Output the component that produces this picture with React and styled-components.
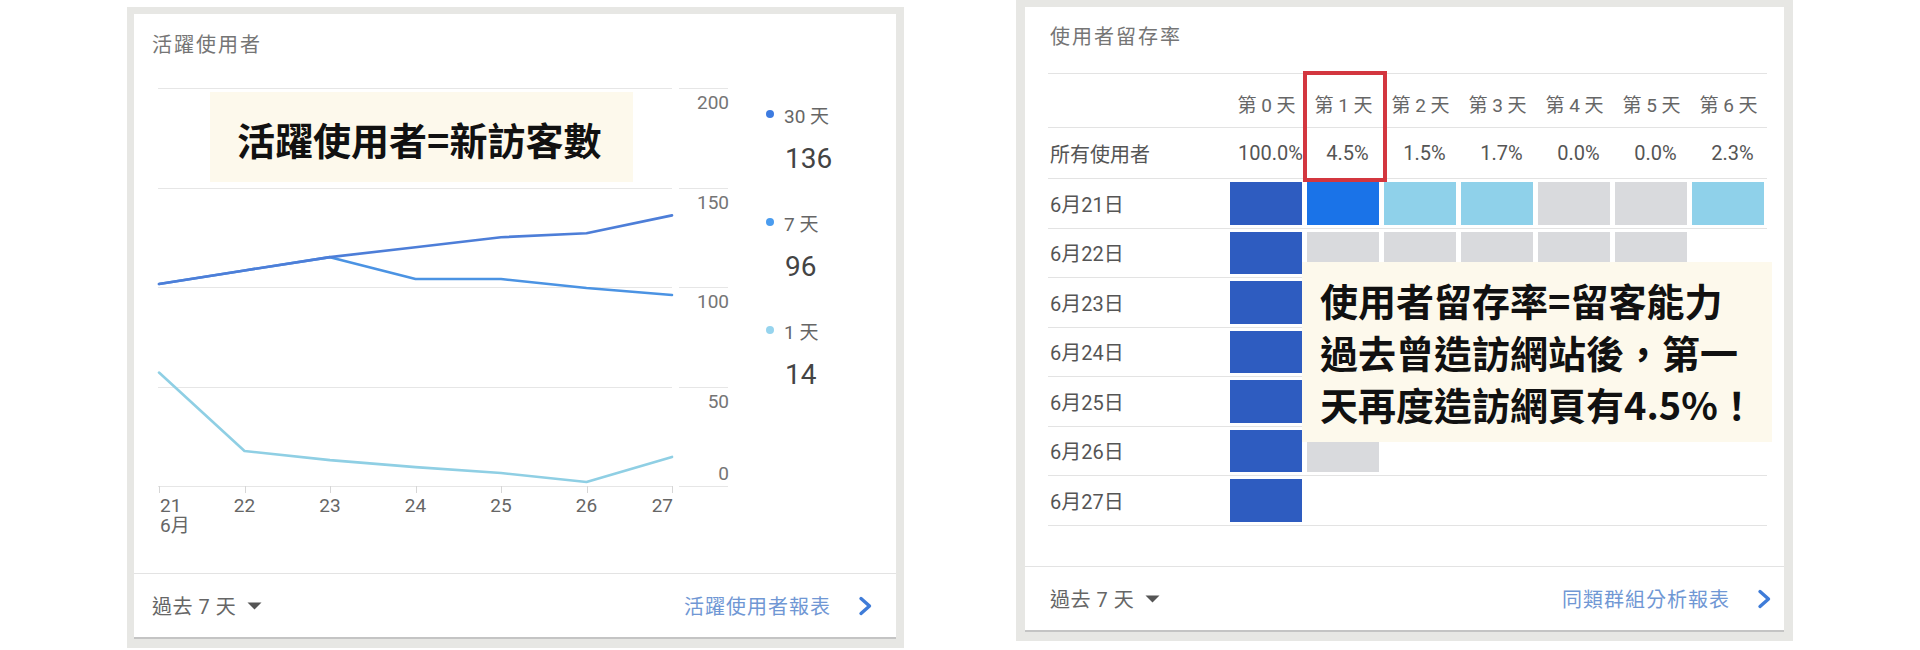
import React from 'react';
import styled, { createGlobalStyle } from 'styled-components';

const GlobalStyle = createGlobalStyle`
  html, body { margin: 0; padding: 0; background: #ffffff; }
  body { font-family: Roboto, "Noto Sans CJK TC", sans-serif; }
  * { box-sizing: border-box; }
`;

const Page = styled.div`
  width: 1920px;
  height: 650px;
  overflow: hidden;
  display: flex;
  align-items: flex-start;
  gap: 112px;
  padding-left: 127px;
`;

const Frame = styled.div`
  background: #e7e7e4;
  padding: ${(p) => p.$pad};
  margin-top: ${(p) => p.$top}px;
`;

const Card = styled.div`
  position: relative;
  width: ${(p) => p.$w}px;
  height: 623px;
  background: #ffffff;
  box-shadow: 0 2px 0 #c4c4c4;
  display: flex;
  flex-direction: column;
`;

const CardTitle = styled.div`
  height: ${(p) => p.$pt + 26}px;
  padding: ${(p) => p.$pt}px 0 0 ${(p) => p.$pl}px;
  font-size: 20px;
  letter-spacing: 2px;
  line-height: 26px;
  color: #757575;
  white-space: nowrap;
`;

/* ---------- left card: chart ---------- */

const ChartRow = styled.div`
  position: relative;
  display: flex;
  height: 515px;
  padding-left: 18px;
`;

const ChartSvg = styled.svg`
  display: block;
  flex: none;
  font-family: Roboto, "Noto Sans CJK TC", sans-serif;
`;

const Legend = styled.div`
  display: flex;
  flex-direction: column;
  margin-left: 32px;
  padding-top: 44px;
`;

const LegendItem = styled.div`
  height: 108px;
`;

const LegendLabel = styled.div`
  display: flex;
  align-items: center;
  height: 24px;
  font-size: 19px;
  color: #666666;
  white-space: nowrap;
`;

const Dot = styled.span`
  width: 8px;
  height: 8px;
  border-radius: 50%;
  background: ${(p) => p.$c};
  margin-right: 10px;
`;

const LegendValue = styled.div`
  margin-top: 15px;
  margin-left: 19px;
  font-size: 28px;
  line-height: 36px;
  color: #444444;
`;

const Note = styled.div`
  position: absolute;
  left: ${(p) => p.$left}px;
  top: ${(p) => p.$top}px;
  width: ${(p) => p.$w}px;
  height: ${(p) => p.$h}px;
  padding: ${(p) => p.$pad};
  background: #fdf9ec;
  font-family: "Noto Sans CJK TC", sans-serif;
  font-weight: 700;
  font-size: 38px;
  line-height: ${(p) => p.$lh}px;
  color: #111111;
  z-index: 2;
`;

const NoteLine = styled.div`
  white-space: nowrap;
`;

/* ---------- right card: table ---------- */

const Table = styled.div`
  position: relative;
  margin: 23px 17px 0 23px;
  border-top: 1px solid #e3e3e3;
`;

const Row = styled.div`
  display: grid;
  grid-template-columns: 180px repeat(7, 77px);
  align-items: center;
  height: ${(p) => p.$h}px;
  border-bottom: 1px solid #e3e3e3;
`;

const RowLabel = styled.div`
  padding-left: 2px;
  font-size: 20px;
  color: #555555;
  white-space: nowrap;
`;

const HeadCell = styled.div`
  text-align: center;
  padding-top: 5px;
  font-size: 19px;
  color: #666666;
  white-space: nowrap;
`;

const PctCell = styled.div`
  text-align: center;
  padding-left: 8px;
  font-size: 20px;
  color: #555555;
  white-space: nowrap;
`;

const Cell = styled.div`
  align-self: stretch;
  margin: 3px 3px 3px 2px;
  background: ${(p) => p.$c};
`;

const Highlight = styled.div`
  position: absolute;
  left: 255px;
  top: -3px;
  width: 84px;
  height: 111px;
  border: 4px solid #d3363f;
  z-index: 3;
`;

/* ---------- footer ---------- */

const Footer = styled.div`
  margin-top: auto;
  height: 64px;
  border-top: 1px solid #e3e3e3;
  display: flex;
  align-items: center;
  justify-content: space-between;
  padding: 0 ${(p) => p.$pr}px 0 ${(p) => p.$pl}px;
`;

const Range = styled.div`
  display: flex;
  align-items: center;
  font-size: 20px;
  letter-spacing: 0.5px;
  color: #666666;
  white-space: nowrap;
`;

const Caret = styled.svg`
  margin-left: 11px;
  display: block;
`;

const ReportLink = styled.div`
  display: flex;
  align-items: center;
  font-size: 20px;
  letter-spacing: 1px;
  color: #7097d4;
  white-space: nowrap;
`;

const Chevron = styled.svg`
  margin-left: 27px;
  display: block;
`;

/* ---------- data ---------- */

const X = (i) => 7 + i * 85.5;
const Y = (v) => 428 - v * 1.99;

const series = [
  { color: '#4d7ed8', data: [101.5, 108.3, 115, 120, 125, 127, 136] },
  { color: '#4b93e3', data: [101.5, 108.3, 115, 104, 104, 99.5, 96] },
  { color: '#8fcfe4', data: [57, 17.6, 13, 9.5, 6.5, 2, 14.6] },
];

const legend = [
  { label: '30 天', value: '136', color: '#3d7be0' },
  { label: '7 天', value: '96', color: '#4a9cef' },
  { label: '1 天', value: '14', color: '#96d4ee' },
];

const COL = {
  d: '#2e5cc0',
  b: '#1a73e8',
  l: '#8fd1ea',
  g: '#d9dadd',
};

const retentionRows = [
  { label: '6月21日', cells: 'dbllggl' },
  { label: '6月22日', cells: 'dggggg' },
  { label: '6月23日', cells: 'dgggg' },
  { label: '6月24日', cells: 'dggg' },
  { label: '6月25日', cells: 'dgg' },
  { label: '6月26日', cells: 'dg' },
  { label: '6月27日', cells: 'd' },
];

const pcts = ['100.0%', '4.5%', '1.5%', '1.7%', '0.0%', '0.0%', '2.3%'];

function CaretIcon() {
  return (
    <Caret width="15" height="8" viewBox="0 0 15 8">
      <path d="M0.5 0.5 L14.5 0.5 L7.5 7.5 Z" fill="#555555" />
    </Caret>
  );
}

function ChevronIcon() {
  return (
    <Chevron width="15" height="20" viewBox="0 0 15 20">
      <polyline
        points="3,2.5 11.5,10 3,17.5"
        fill="none"
        stroke="#3f7cd8"
        strokeWidth="3.4"
        strokeLinecap="round"
        strokeLinejoin="round"
      />
    </Chevron>
  );
}

function LineChart() {
  const ticks = [200, 150, 100, 50, 0];
  const days = [21, 22, 23, 24, 25, 26, 27];
  return (
    <ChartSvg width="582" height="515" viewBox="0 0 582 515">
      {ticks.map((v) => {
        const y = Math.round(Y(v)) + 0.5;
        return (
          <g key={v}>
            <line x1="6" x2="520" y1={y} y2={y} stroke="#e6e6e6" strokeWidth="1" />
            <line x1="527" x2="576" y1={y} y2={y} stroke="#e6e6e6" strokeWidth="1" />
            <text
              x="577"
              y={v === 0 ? y - 7 : y + 20}
              textAnchor="end"
              fontSize="19"
              fill="#757575"
            >
              {v}
            </text>
          </g>
        );
      })}
      {days.map((d, i) => {
        const x = Math.round(X(i)) + 0.5;
        const anchor = i === 0 ? 'start' : i === 6 ? 'end' : 'middle';
        const tx = i === 0 ? X(i) + 1 : i === 6 ? X(i) + 1 : X(i);
        return (
          <g key={d}>
            <line x1={x} x2={x} y1="428" y2="435" stroke="#d6d6d6" strokeWidth="1" />
            <text x={tx} y="454" textAnchor={anchor} fontSize="19" fill="#666666">
              {d}
            </text>
          </g>
        );
      })}
      <text x="8" y="474" fontSize="19" fill="#666666">
        6月
      </text>
      {series
        .slice()
        .reverse()
        .map((s) => (
          <polyline
            key={s.color}
            points={s.data.map((v, i) => `${X(i)},${Y(v)}`).join(' ')}
            fill="none"
            stroke={s.color}
            strokeWidth="2.6"
            strokeLinejoin="round"
            strokeLinecap="round"
          />
        ))}
    </ChartSvg>
  );
}

function ActiveUsersCard() {
  return (
    <Frame $pad="7px 8px 11px 7px" $top={7}>
      <Card $w={762}>
        <CardTitle $pt={18} $pl={18}>活躍使用者</CardTitle>
        <ChartRow>
          <LineChart />
          <Legend>
            {legend.map((l) => (
              <LegendItem key={l.label}>
                <LegendLabel>
                  <Dot $c={l.color} />
                  {l.label}
                </LegendLabel>
                <LegendValue>{l.value}</LegendValue>
              </LegendItem>
            ))}
          </Legend>
          <Note $left={76} $top={34} $w={423} $h={90} $pad="22px 0 0 27px" $lh={50}>
            <NoteLine>活躍使用者=新訪客數</NoteLine>
          </Note>
        </ChartRow>
        <Footer $pl={18} $pr={23}>
          <Range>
            過去 7 天
            <CaretIcon />
          </Range>
          <ReportLink>
            活躍使用者報表
            <ChevronIcon />
          </ReportLink>
        </Footer>
      </Card>
    </Frame>
  );
}

function RetentionCard() {
  return (
    <Frame $pad="7px 9px 11px 9px" $top={0}>
      <Card $w={759}>
        <CardTitle $pt={17} $pl={25}>使用者留存率</CardTitle>
        <Table>
          <Row $h={54}>
            <RowLabel />
            {[0, 1, 2, 3, 4, 5, 6].map((d) => (
              <HeadCell key={d}>第 {d} 天</HeadCell>
            ))}
          </Row>
          <Row $h={51}>
            <RowLabel>所有使用者</RowLabel>
            {pcts.map((p, i) => (
              <PctCell key={i}>{p}</PctCell>
            ))}
          </Row>
          {retentionRows.map((r) => (
            <Row key={r.label} $h={49.5}>
              <RowLabel>{r.label}</RowLabel>
              {r.cells.split('').map((c, i) => (
                <Cell key={i} $c={COL[c]} />
              ))}
            </Row>
          ))}
          <Highlight />
          <Note $left={254} $top={188} $w={470} $h={180} $pad="12px 0 0 18px" $lh={52}>
            <NoteLine>使用者留存率=留客能力</NoteLine>
            <NoteLine>過去曾造訪網站後，第一</NoteLine>
            <NoteLine>天再度造訪網頁有4.5%！</NoteLine>
          </Note>
        </Table>
        <Footer $pl={25} $pr={12}>
          <Range>
            過去 7 天
            <CaretIcon />
          </Range>
          <ReportLink>
            同類群組分析報表
            <ChevronIcon />
          </ReportLink>
        </Footer>
      </Card>
    </Frame>
  );
}

export default function App() {
  return (
    <>
      <GlobalStyle />
      <Page>
        <ActiveUsersCard />
        <RetentionCard />
      </Page>
    </>
  );
}
